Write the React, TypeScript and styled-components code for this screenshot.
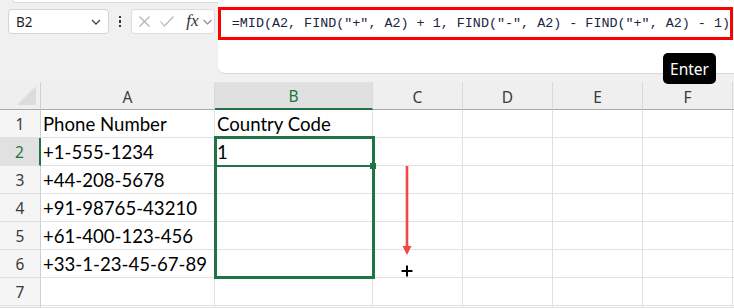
import React from "react";
import styled, { createGlobalStyle } from "styled-components";

const GlobalStyle = createGlobalStyle`
  html, body {
    margin: 0;
    padding: 0;
    background: #f0f0f0;
  }
  * {
    box-sizing: border-box;
  }
`;

const GREEN = "#217346";

const Page = styled.div`
  position: relative;
  width: 734px;
  height: 308px;
  overflow: hidden;
  display: flex;
  flex-direction: column;
  background: #f0f0f0;
  font-family: "Noto Sans", "Liberation Sans", sans-serif;
`;

/* formula bar strip */
const Toolbar = styled.div`
  display: flex;
  height: 82px;
  flex-shrink: 0;
`;

const LeftPane = styled.div`
  width: 220px;
  display: flex;
  flex-direction: column;
`;

const RibbonEdge = styled.div`
  height: 3px;
  margin-left: 12px;
  background: #fff;
  border-left: 1px solid #dadada;
  border-bottom: 1px solid #dadada;
  border-bottom-left-radius: 5px;
`;

const ControlsRow = styled.div`
  display: flex;
  align-items: center;
  margin-top: 6px;
  padding-left: 8px;
`;

const NameBox = styled.div`
  width: 101px;
  height: 25px;
  display: flex;
  align-items: center;
  justify-content: space-between;
  padding: 0 7px 0 7px;
  background: #fff;
  border: 1px solid #d4d4d4;
  border-radius: 4px;
  font-size: 13.5px;
  color: #1f1f1f;
`;

const DotsButton = styled.div`
  width: 22px;
  height: 25px;
  display: flex;
  flex-direction: column;
  align-items: center;
  justify-content: center;
  gap: 2px;

  span {
    width: 2.5px;
    height: 2.5px;
    background: #333;
  }
`;

const FunctionBox = styled.div`
  width: 84px;
  height: 25px;
  display: flex;
  align-items: center;
  padding-left: 6px;
  background: #fff;
  border: 1px solid #dcdcdc;
  border-radius: 4px;
`;

const IconSlot = styled.span<{ $w: number; $gap?: number }>`
  width: ${(p) => p.$w}px;
  margin-right: ${(p) => p.$gap ?? 0}px;
  display: flex;
  align-items: center;
  justify-content: center;
`;

const FxLabel = styled.span`
  font-family: "Liberation Serif", "DejaVu Serif", serif;
  font-style: italic;
  font-size: 17px;
  color: #333;
  line-height: 1;
  margin-top: -2px;
`;

const FormulaBar = styled.div`
  flex: 1;
  height: 74px;
  padding-top: 7px;
  background: #fff;
  border-bottom: 1px solid #d6d6d6;
  border-bottom-left-radius: 7px;
`;

const FormulaInput = styled.div`
  height: 33px;
  margin-right: 1px;
  display: flex;
  align-items: center;
  padding-left: 11px;
  border: 3px solid #ff0000;
  font-family: "Liberation Mono", "DejaVu Sans Mono", monospace;
  font-size: 13.4px;
  color: #1a2640;
  white-space: pre;
`;

const Tooltip = styled.div`
  position: absolute;
  left: 663px;
  top: 53px;
  width: 53px;
  height: 31px;
  display: flex;
  align-items: center;
  justify-content: center;
  background: #000;
  border-radius: 5px;
  color: #fff;
  font-size: 15.5px;
  z-index: 5;
`;

/* worksheet grid */
const Sheet = styled.div`
  flex: 1;
  display: grid;
  grid-template-columns: 41px 174px 158px repeat(4, 90px) 1fr;
  grid-template-rows: repeat(8, 28px) 1fr;
  background: #fff;
`;

const Cell = styled.div<{ $row: number; $col: number }>`
  grid-row: ${(p) => p.$row};
  grid-column: ${(p) => p.$col};
  display: flex;
  align-items: center;
  padding-left: 2px;
  padding-top: 1px;
  border-right: 1px solid #e1e1e1;
  border-bottom: 1px solid #e1e1e1;
  font-family: Lato, "Open Sans", sans-serif;
  font-size: 18.6px;
  color: #000;
  white-space: nowrap;
  overflow: visible;
`;

const ColHeader = styled.div<{ $col: number; $active?: boolean }>`
  grid-row: 1;
  grid-column: ${(p) => p.$col};
  display: flex;
  align-items: center;
  justify-content: center;
  padding-top: 2px;
  background: ${(p) => (p.$active ? "#e0e0e0" : "#efefef")};
  border-right: 1px solid #d9d9d9;
  border-bottom: ${(p) => (p.$active ? `2px solid ${GREEN}` : "1px solid #ababab")};
  font-size: 15.5px;
  color: ${(p) => (p.$active ? GREEN : "#3a3a3a")};
`;

const Corner = styled.div`
  grid-row: 1;
  grid-column: 1;
  display: flex;
  align-items: flex-end;
  justify-content: flex-end;
  padding: 0 4px 4px 0;
  background: #efefef;
  border-right: 1px solid #d0d0d0;
  border-bottom: 1px solid #ababab;
`;

const RowHeader = styled.div<{ $row: number; $active?: boolean }>`
  grid-row: ${(p) => p.$row};
  grid-column: 1;
  display: flex;
  align-items: center;
  justify-content: center;
  padding-top: 1px;
  background: ${(p) => (p.$active ? "#e1e1e1" : "#f5f5f5")};
  border-right: ${(p) => (p.$active ? `2px solid ${GREEN}` : "1px solid #cfcfcf")};
  border-bottom: 1px solid #e1e1e1;
  font-size: 15.5px;
  color: ${(p) => (p.$active ? GREEN : "#3a3a3a")};
`;

const SelectionFrame = styled.div`
  grid-row: 3 / 8;
  grid-column: 3;
  margin: -2px -2px -1px -1px;
  border: 3px solid ${GREEN};
  pointer-events: none;
  z-index: 2;
`;

const ActiveCell = styled.div`
  grid-row: 3;
  grid-column: 3;
  position: relative;
  margin: 0 0 -1px 0;
  border-bottom: 2px solid ${GREEN};
  z-index: 2;
`;

const FillHandle = styled.span`
  position: absolute;
  right: -3px;
  bottom: -4px;
  width: 6px;
  height: 6px;
  background: ${GREEN};
`;

const DragHint = styled.div`
  grid-row: 4 / 8;
  grid-column: 4;
  padding-left: 28px;
  z-index: 3;
`;

const columns = ["A", "B", "C", "D", "E", "F"];

const data: string[][] = [
  ["Phone Number", "Country Code"],
  ["+1-555-1234", "1"],
  ["+44-208-5678", ""],
  ["+91-98765-43210", ""],
  ["+61-400-123-456", ""],
  ["+33-1-23-45-67-89", ""],
  ["", ""],
  ["", ""],
];

const Chevron = () => (
  <svg width="10" height="6" viewBox="0 0 10 6">
    <polyline points="1,1 5,5 9,1" fill="none" stroke="#444" strokeWidth="1.3" />
  </svg>
);

export default function App() {
  return (
    <Page>
      <GlobalStyle />
      <Toolbar>
        <LeftPane>
          <RibbonEdge />
          <ControlsRow>
            <NameBox>
              <span>B2</span>
              <Chevron />
            </NameBox>
            <DotsButton>
              <span />
              <span />
              <span />
            </DotsButton>
            <FunctionBox>
              <IconSlot $w={12} $gap={10}>
                <svg width="11" height="11" viewBox="0 0 11 11">
                  <path d="M0.5 0.5 L10.5 10.5 M10.5 0.5 L0.5 10.5" stroke="#b0b0b0" strokeWidth="1.1" />
                </svg>
              </IconSlot>
              <IconSlot $w={14} $gap={11}>
                <svg width="14" height="11" viewBox="0 0 14 11">
                  <polyline points="0.5,5.5 4.5,10 13.5,0.5" fill="none" stroke="#b0b0b0" strokeWidth="1.1" />
                </svg>
              </IconSlot>
              <IconSlot $w={15} $gap={3}>
                <FxLabel>fx</FxLabel>
              </IconSlot>
              <IconSlot $w={9}>
                <svg width="9" height="6" viewBox="0 0 9 6">
                  <polyline points="0.5,1 4.5,5 8.5,1" fill="none" stroke="#8a8a8a" strokeWidth="1.1" />
                </svg>
              </IconSlot>
            </FunctionBox>
          </ControlsRow>
        </LeftPane>
        <FormulaBar>
          <FormulaInput>{'=MID(A2, FIND("+", A2) + 1, FIND("-", A2) - FIND("+", A2) - 1)'}</FormulaInput>
        </FormulaBar>
      </Toolbar>

      <Sheet>
        <Corner>
          <svg width="19" height="19" viewBox="0 0 19 19">
            <polygon points="19,0 19,19 0,19" fill="#dcdcdc" />
          </svg>
        </Corner>
        {columns.map((c, i) => (
          <ColHeader key={c} $col={i + 2} $active={c === "B"}>
            {c}
          </ColHeader>
        ))}
        <ColHeader $col={8} />

        {data.map((row, r) => (
          <React.Fragment key={r}>
            <RowHeader $row={r + 2} $active={r === 1}>
              {r < 7 ? r + 1 : ""}
            </RowHeader>
            {columns.map((c, ci) => (
              <Cell key={c} $row={r + 2} $col={ci + 2}>
                {ci < 2 ? row[ci] : ""}
              </Cell>
            ))}
            <Cell $row={r + 2} $col={8} />
          </React.Fragment>
        ))}

        <ActiveCell>
          <FillHandle />
        </ActiveCell>
        <SelectionFrame />
        <DragHint>
          <svg width="14" height="112" viewBox="0 0 14 112">
            <line x1="6" y1="0" x2="6" y2="82" stroke="#f04848" strokeWidth="2.6" />
            <polygon points="1.5,80 10.5,80 6,89" fill="#f04848" />
            <path d="M6 99 V111 M0 105 H12" stroke="#fff" strokeWidth="4" />
            <path d="M6 99.5 V110.5 M0.5 105 H11.5" stroke="#000" strokeWidth="2" />
          </svg>
        </DragHint>
      </Sheet>
      <Tooltip>Enter</Tooltip>
    </Page>
  );
}
